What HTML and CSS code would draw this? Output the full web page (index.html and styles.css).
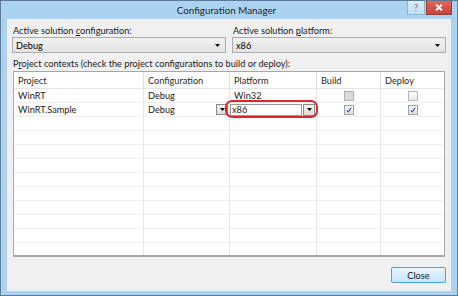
FILE: index.html
```html
<!DOCTYPE html>
<html lang="en">
  <head>
    <meta charset="UTF-8" />
    <title>Configuration Manager</title>
    <link rel="stylesheet" href="styles.css">
  </head>
  <body>
    <div class="window">
      <div class="titlebar">
        <span></span>
        <span class="title">Configuration Manager</span>
        <div class="caption-buttons">
          <span class="cap-btn help">?</span>
          <span class="cap-btn close">
            <svg width="8" height="7" viewBox="0 0 8 7"><path d="M1 0.5L7 6.5M7 0.5L1 6.5" stroke="#fff" stroke-width="1.8"/></svg>
          </span>
        </div>
      </div>

      <div class="client">
        <div class="top-fields">
          <div class="field">
            <label>Active solution <u>c</u>onfiguration:</label>
            <div class="combo">
              <span>Debug</span>
              <svg class="arrow" width="5" height="3" viewBox="0 0 5 3"><path d="M0 0H5L2.5 3Z"/></svg>
            </div>
          </div>
          <div class="field">
            <label>Active solution <u>p</u>latform:</label>
            <div class="combo">
              <span>x86</span>
              <svg class="arrow" width="5" height="3" viewBox="0 0 5 3"><path d="M0 0H5L2.5 3Z"/></svg>
            </div>
          </div>
        </div>

        <div class="section-label">P<u>r</u>oject contexts (check the project configurations to build or deploy):</div>

        <div class="grid">
          <div class="row head">
            <span>Project</span>
            <span>Configuration</span>
            <span>Platform</span>
            <span>Build</span>
            <span>Deploy</span>
          </div>
          <div class="row">
            <span>WinRT</span>
            <span>Debug</span>
            <span>Win32</span>
            <span class="center"><i class="check disabled"></i></span>
            <span class="center"><i class="check"></i></span>
          </div>
          <div class="row">
            <span>WinRT.Sample</span>
            <span class="cell-combo">
              Debug
              <b class="drop-btn"><svg width="5" height="3" viewBox="0 0 5 3"><path d="M0 0H5L2.5 3Z"/></svg></b>
            </span>
            <span class="cell-edit">
              <em class="edit-box">x86</em>
              <b class="drop-btn tall"><svg width="5" height="3" viewBox="0 0 5 3"><path d="M0 0H5L2.5 3Z"/></svg></b>
              <i class="highlight"></i>
            </span>
            <span class="center"><i class="check checked"><svg width="6" height="6" viewBox="0 0 6 6"><path d="M0.8 3.2L2.3 4.8L5.2 0.8" fill="none" stroke="#3a57ad" stroke-width="1.1"/></svg></i></span>
            <span class="center"><i class="check checked"><svg width="6" height="6" viewBox="0 0 6 6"><path d="M0.8 3.2L2.3 4.8L5.2 0.8" fill="none" stroke="#3a57ad" stroke-width="1.1"/></svg></i></span>
          </div>
          <div class="row"><span></span><span></span><span></span><span></span><span></span></div>
          <div class="row"><span></span><span></span><span></span><span></span><span></span></div>
          <div class="row"><span></span><span></span><span></span><span></span><span></span></div>
          <div class="row"><span></span><span></span><span></span><span></span><span></span></div>
          <div class="row"><span></span><span></span><span></span><span></span><span></span></div>
          <div class="row"><span></span><span></span><span></span><span></span><span></span></div>
          <div class="row"><span></span><span></span><span></span><span></span><span></span></div>
          <div class="row"><span></span><span></span><span></span><span></span><span></span></div>
          <div class="row"><span></span><span></span><span></span><span></span><span></span></div>
          <div class="row"><span></span><span></span><span></span><span></span><span></span></div>
          <div class="row"><span></span><span></span><span></span><span></span><span></span></div>
        </div>

        <div class="footer">
          <button class="close-btn">Close</button>
        </div>
      </div>
    </div>
  </body>
</html>
```

FILE: styles.css
```css
/* Dialog window */
* {
  margin: 0;
  padding: 0;
  box-sizing: border-box;
}

body {
  width: 458px;
  height: 296px;
  overflow: hidden;
  font-family: Lato, "Noto Sans", sans-serif;
  font-size: 9.2px;
  color: #1a1a1a;
}

.window {
  width: 458px;
  height: 296px;
  border: 1px solid #5d7b96;
  background: #abd3f1;
  display: flex;
  flex-direction: column;
}

/* Title bar */
.titlebar {
  height: 18px;
  display: grid;
  grid-template-columns: 1fr auto 1fr;
  align-items: start;
  padding-right: 5px;
}

.title {
  font-size: 9.8px;
  line-height: 18px;
  color: #1f1f1f;
}

.caption-buttons {
  justify-self: end;
  display: flex;
  gap: 1px;
}

.cap-btn {
  height: 14px;
  display: flex;
  align-items: center;
  justify-content: center;
}

.cap-btn.help {
  width: 18px;
  border: 1px solid #8fb3cf;
  border-top: none;
  background: linear-gradient(#d8ecfa, #c3e0f5);
  color: #5d6d7a;
  font-size: 9px;
}

.cap-btn.close {
  width: 26px;
  border: 1px solid #9b3b34;
  border-top: none;
  background: linear-gradient(#e0655d, #c5443b);
}

/* Client area */
.client {
  flex: 1;
  margin: 0 6px 4px 6px;
  background: #f0f0f0;
  padding: 6px 5px 0 5px;
  display: flex;
  flex-direction: column;
}

.top-fields {
  display: grid;
  grid-template-columns: 1fr 1fr;
  gap: 6px;
}

.field label {
  display: block;
  line-height: 12px;
  padding-left: 1px;
}

.combo {
  height: 16px;
  border: 1px solid #acacac;
  background: linear-gradient(#f2f2f2, #e3e3e3);
  display: flex;
  align-items: center;
  justify-content: space-between;
  padding: 0 5px 0 3px;
  color: #000;
}

.section-label {
  margin-top: 5px;
  line-height: 12px;
  padding-left: 1px;
}

/* Project grid */
.grid {
  margin: 1px 1px 0 1px;
  height: 186px;
  overflow: hidden;
  background: #fff;
  border: 1px solid #a7a7a7;
  border-bottom-width: 2px;
}

.row {
  display: grid;
  grid-template-columns: 130px 86px 87px 64px 1fr;
  height: 14px;
}

.row.head {
  height: 17px;
  color: #2a2a2a;
}

.row span {
  border-right: 1px solid #e6e6ec;
  border-bottom: 1px solid #eeeef2;
  padding-left: 4px;
  display: flex;
  align-items: center;
  position: relative;
}

.row span:last-child {
  border-right: none;
}

.row.head span {
  border-right-color: #dedee4;
  border-bottom-color: #e3e3e8;
}

.row span.center {
  justify-content: center;
  padding-left: 0;
}

.check {
  width: 10px;
  height: 10px;
  border: 1px solid #b4b4b4;
  background: linear-gradient(#fbfbfb, #ececec);
  display: flex;
  align-items: center;
  justify-content: center;
}

.check.disabled {
  background: #dcdcdc;
  border-color: #b0b0b0;
}

.check.checked {
  border-color: #a2a2a2;
  background: linear-gradient(#f2f2f2, #e2e2e2);
}

.row span.cell-combo {
  justify-content: space-between;
  padding-right: 1px;
}

.drop-btn {
  width: 12px;
  height: 11px;
  border: 1px solid #8a8a8a;
  background: linear-gradient(#f4f4f4, #dcdcdc);
  display: flex;
  align-items: center;
  justify-content: center;
}

.drop-btn.tall {
  height: 12px;
}

.row span.cell-edit {
  padding-left: 0;
  gap: 1px;
}

.edit-box {
  width: 72px;
  height: 12px;
  border: 1px solid #9a9a9a;
  background: #fff;
  font-style: normal;
  line-height: 10px;
  padding-left: 1px;
}

.highlight {
  position: absolute;
  left: -5px;
  top: -3px;
  width: 93px;
  height: 18px;
  border: 2px solid #e1252b;
  border-radius: 7px;
}

/* Footer */
.footer {
  display: flex;
  justify-content: flex-end;
  margin-top: 10px;
}

.close-btn {
  width: 55px;
  height: 16px;
  font-family: Lato, "Noto Sans", sans-serif;
  font-size: 9.2px;
  color: #1a1a1a;
  border: 1px solid #4fa0d6;
  border-radius: 2px;
  background: linear-gradient(#e9f5fd, #c3e5f9);
}
```
